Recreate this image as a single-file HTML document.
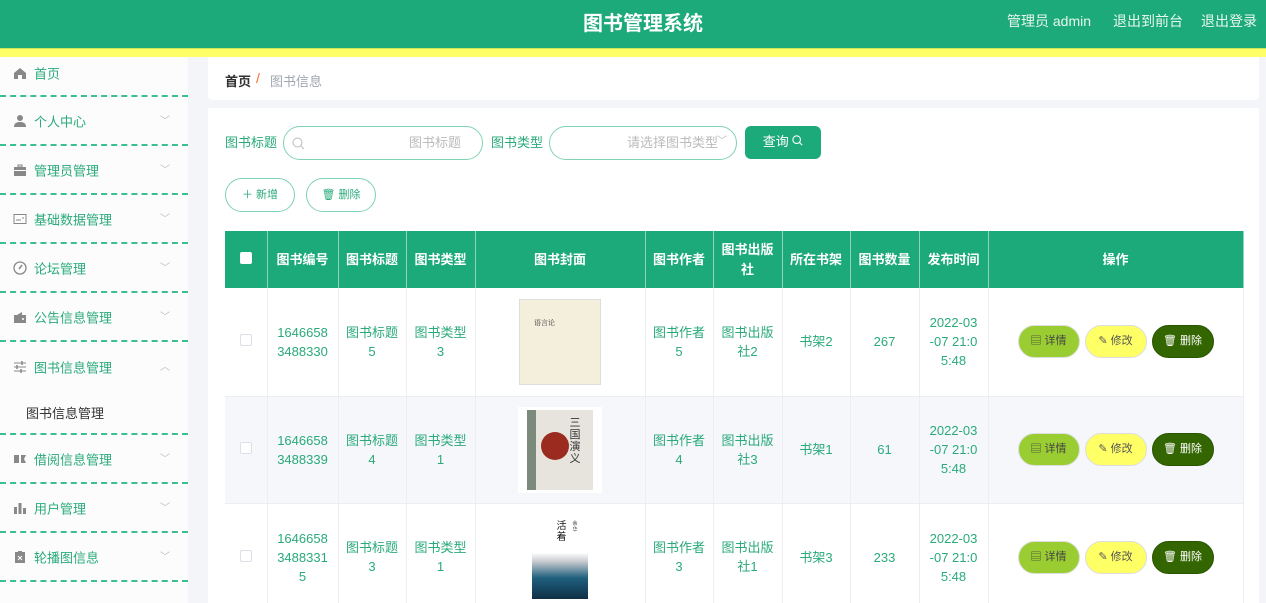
<!DOCTYPE html>
<html><head><meta charset="utf-8"><style>
*{margin:0;padding:0;box-sizing:border-box}
html,body{width:1266px;height:603px;overflow:hidden}
body{background:#f4f5f8;font-family:"Liberation Sans","Noto Sans CJK SC",sans-serif;font-size:13px;position:relative}
.hdr{position:absolute;left:0;top:0;width:1266px;height:48px;background:#1caa7a}
.ystrip{position:absolute;left:0;top:48px;width:1266px;height:9px;background:#ffff66;border-top:1px solid #c9e65a}
.title{position:absolute;left:0;width:1286px;top:7px;text-align:center;color:#fff;font-size:20px;font-weight:bold}
.hr{position:absolute;top:11px;color:#e8f7ef;font-size:14px}
.side{position:absolute;left:0;top:57px;width:188px;height:546px;background:#fcfcfd}
.it{position:absolute;left:0;width:188px;height:49px;border-bottom:2px dashed #3cbf8f;color:#2aaa7a;font-size:13px}
.it span.t{position:absolute;left:34px;top:50%;transform:translateY(-50%)}
.it .ic{position:absolute;left:13px;top:50%;transform:translateY(-50%);width:14px;height:14px}
.it .ar{position:absolute;left:160px;top:50%;transform:translateY(-60%);color:#bbb;font-size:10px}
.sub{position:absolute;left:0;width:188px;border-bottom:2px dashed #3cbf8f;background:#fcfcfd}
.sub span{position:absolute;left:26px;color:#333}
.bc{position:absolute;left:208px;top:57px;width:1051px;height:43px;background:#fff;border-radius:0 0 4px 4px}
.box{position:absolute;left:208px;top:108px;width:1051px;height:495px;background:#fff}
.lbl{position:absolute;color:#2aaa7a;font-size:13px;line-height:16px}
.inp{position:absolute;height:34px;border:1px solid #7fd3b0;border-radius:17px;color:#bbb;font-size:13px}
.btn{position:absolute;height:34px;border:1px solid #7fd3b0;border-radius:17px;color:#2aaa7a;font-size:11px;text-align:center;line-height:32px;background:#fff}
table{position:absolute;left:225px;top:231px;border-collapse:collapse;table-layout:fixed;width:1018px}
th{background:#1caa7a;color:#fff;font-weight:bold;font-size:13px;height:57px;border-right:1px solid #8fd4b8;line-height:20px;padding:0 4px}
td{color:#2aaa7a;font-size:13px;text-align:center;border-right:1px solid #eceef2;border-bottom:1px solid #eceef2;line-height:19px}
tr.a td{background:#f5f7fa}
.cb{display:inline-block;width:12px;height:12px;border:1px solid #dcdfe6;border-radius:2px;background:#fff}
.ab{display:inline-block;width:62px;height:33px;border-radius:17px;line-height:31px;font-size:11px;margin:0 2.5px;border:1px solid #ddd;vertical-align:middle}
.d1{background:#9acd32;color:#444}.d2{background:#ffff66;color:#555}.d3{background:#336600;color:#fff;border-color:#2a5500}
.cov{display:inline-block;vertical-align:middle;position:relative}
</style></head><body>
<div class="hdr"></div><div class="title">图书管理系统</div>
<div class="hr" style="left:1007px">管理员 admin</div>
<div class="hr" style="left:1113px">退出到前台</div>
<div class="hr" style="left:1201px">退出登录</div>
<div class="ystrip"></div>

<div class="side">
<div class="it" style="top:0;height:40px"><svg class="ic" style="top:16px" viewBox="0 0 14 14"><path d="M1 7L7 2l6 5v6H9V9H5v4H1z" fill="#888"/></svg><span class="t" style="top:16px">首页</span></div>
<div class="it" style="top:40px"><svg class="ic" viewBox="0 0 14 14"><circle cx="7" cy="4" r="3" fill="#888"/><path d="M1 13c0-4 3-5 6-5s6 1 6 5z" fill="#888"/></svg><span class="t">个人中心</span><span class="ar">﹀</span></div>
<div class="it" style="top:89px"><svg class="ic" viewBox="0 0 14 14"><rect x="1" y="4" width="12" height="9" fill="#888"/><rect x="5" y="2" width="4" height="2" fill="none" stroke="#888"/><rect x="1" y="7" width="12" height="1" fill="#fff"/></svg><span class="t">管理员管理</span><span class="ar">﹀</span></div>
<div class="it" style="top:138px"><svg class="ic" viewBox="0 0 14 14"><rect x="1" y="2.5" width="12" height="9" fill="none" stroke="#888"/><path d="M3 8h5M9 6h2" stroke="#888"/></svg><span class="t">基础数据管理</span><span class="ar">﹀</span></div>
<div class="it" style="top:187px"><svg class="ic" viewBox="0 0 14 14"><circle cx="7" cy="7" r="6" fill="none" stroke="#888" stroke-width="1.3"/><path d="M6 8l3-4" stroke="#888" stroke-width="1.5"/></svg><span class="t">论坛管理</span><span class="ar">﹀</span></div>
<div class="it" style="top:236px"><svg class="ic" viewBox="0 0 14 14"><rect x="1" y="5" width="12" height="8" fill="#888"/><path d="M4 5l5-3v3" fill="#888"/><circle cx="10" cy="9" r="1" fill="#fff"/></svg><span class="t">公告信息管理</span><span class="ar">﹀</span></div>
<div class="it" style="top:285px;border-bottom:none;height:49px"><svg class="ic" viewBox="0 0 14 14"><path d="M1 3h12M1 7h12M1 11h12" stroke="#888"/><path d="M9 1v4M4 5v4M8 9v4" stroke="#888" stroke-width="1.5"/></svg><span class="t">图书信息管理</span><span class="ar">︿</span></div>
<div class="sub" style="top:334px;height:44px"><span style="top:12px">图书信息管理</span></div>
<div class="it" style="top:378px"><svg class="ic" viewBox="0 0 14 14"><path d="M1 3h5v8H1zM8 3h5l-2 4 2 4H8z" fill="#888"/></svg><span class="t">借阅信息管理</span><span class="ar">﹀</span></div>
<div class="it" style="top:427px"><svg class="ic" viewBox="0 0 14 14"><rect x="1" y="6" width="3" height="7" fill="#888"/><rect x="5.5" y="2" width="3" height="11" fill="#888"/><rect x="10" y="7" width="3" height="6" fill="#888"/></svg><span class="t">用户管理</span><span class="ar">﹀</span></div>
<div class="it" style="top:476px"><svg class="ic" viewBox="0 0 14 14"><rect x="2" y="2" width="10" height="11" fill="#888"/><rect x="5" y="1" width="4" height="2" fill="#888"/><path d="M5 6l4 4M9 6l-4 4" stroke="#fff"/></svg><span class="t">轮播图信息</span><span class="ar">﹀</span></div>
</div>

<div class="bc"><span style="position:absolute;left:17px;top:14px;font-weight:bold;color:#303133">首页</span><span style="position:absolute;left:48px;top:13px;color:#f56c2c;font-size:14px">/</span><span style="position:absolute;left:62px;top:14px;color:#a0a6b0">图书信息</span></div>
<div class="box"></div>
<span class="lbl" style="left:225px;top:135px">图书标题</span>
<div class="inp" style="left:283px;top:126px;width:200px"><svg style="position:absolute;left:8px;top:10px" width="13" height="13" viewBox="0 0 13 13"><circle cx="5.5" cy="5.5" r="4.5" fill="none" stroke="#bbb"/><path d="M9 9l3 3" stroke="#bbb"/></svg><span style="position:absolute;left:125px;top:8px;line-height:16px">图书标题</span></div>
<span class="lbl" style="left:491px;top:135px">图书类型</span>
<div class="inp" style="left:549px;top:126px;width:188px"><span style="position:absolute;left:77px;top:8px;line-height:16px">请选择图书类型</span><span style="position:absolute;left:167px;top:5px;font-size:10px">﹀</span></div>
<div style="position:absolute;left:745px;top:126px;width:76px;height:33px;background:#1caa7a;border-radius:6px;color:#fff;text-align:center;line-height:31px;font-size:13px">查询 <svg width="11" height="11" viewBox="0 0 13 13"><circle cx="5.5" cy="5.5" r="4.5" fill="none" stroke="#fff" stroke-width="1.3"/><path d="M9 9l3 3" stroke="#fff" stroke-width="1.3"/></svg></div>
<div class="btn" style="left:225px;top:178px;width:70px">＋ 新增</div>
<div class="btn" style="left:306px;top:178px;width:70px">🗑 删除</div>

<table>
<colgroup><col style="width:42px"><col style="width:71px"><col style="width:68px"><col style="width:69px"><col style="width:170px"><col style="width:68px"><col style="width:69px"><col style="width:68px"><col style="width:69px"><col style="width:69px"><col style="width:255px"></colgroup>
<tr><th><span class="cb" style="border:none"></span></th><th>图书编号</th><th>图书标题</th><th>图书类型</th><th>图书封面</th><th>图书作者</th><th>图书出版<br>社</th><th>所在书架</th><th>图书数量</th><th>发布时间</th><th>操作</th></tr>
<tr style="height:108px"><td><span class="cb"></span></td><td>1646658<br>3488330</td><td>图书标题<br>5</td><td>图书类型<br>3</td><td><span class="cov" style="width:82px;height:86px;background:#f3efdc;border:1px solid #ddd"><span style="position:absolute;left:14px;top:14px;font-size:7px;color:#333;font-family:'Noto Serif CJK SC',serif">语言论</span></span></td><td>图书作者<br>5</td><td>图书出版<br>社2</td><td>书架2</td><td>267</td><td>2022-03<br>-07 21:0<br>5:48</td><td><span class="ab d1">▤ 详情</span><span class="ab d2">✎ 修改</span><span class="ab d3">🗑 删除</span></td></tr>
<tr class="a" style="height:107px"><td><span class="cb"></span></td><td>1646658<br>3488339</td><td>图书标题<br>4</td><td>图书类型<br>1</td><td><span class="cov" style="width:84px;height:86px;background:#fff"><span style="position:absolute;left:9px;top:3px;width:66px;height:80px;background:linear-gradient(90deg,#7b8a7a 0 14%,#e6e4dc 14%)"></span><span style="position:absolute;left:23px;top:25px;width:28px;height:28px;border-radius:50%;background:#9a2b1e"></span><span style="position:absolute;left:51px;top:10px;font-size:11px;line-height:12px;color:#333;width:12px">三国演义</span></span></td><td>图书作者<br>4</td><td>图书出版<br>社3</td><td>书架1</td><td>61</td><td>2022-03<br>-07 21:0<br>5:48</td><td><span class="ab d1">▤ 详情</span><span class="ab d2">✎ 修改</span><span class="ab d3">🗑 删除</span></td></tr>
<tr style="height:108px"><td><span class="cb"></span></td><td>1646658<br>3488331<br>5</td><td>图书标题<br>3</td><td>图书类型<br>1</td><td><span class="cov" style="width:56px;height:84px;background:linear-gradient(180deg,#fff 0 45%,#c9ccd0 55%,#1f5f7e 75%,#0f2f45)"><span style="position:absolute;left:24px;top:6px;font-size:10px;line-height:11px;width:11px;color:#111">活着</span><span style="position:absolute;left:40px;top:6px;font-size:5px;line-height:6px;width:6px;color:#333">余华</span></span></td><td>图书作者<br>3</td><td>图书出版<br>社1</td><td>书架3</td><td>233</td><td>2022-03<br>-07 21:0<br>5:48</td><td><span class="ab d1">▤ 详情</span><span class="ab d2">✎ 修改</span><span class="ab d3">🗑 删除</span></td></tr>
</table>
</body></html>
